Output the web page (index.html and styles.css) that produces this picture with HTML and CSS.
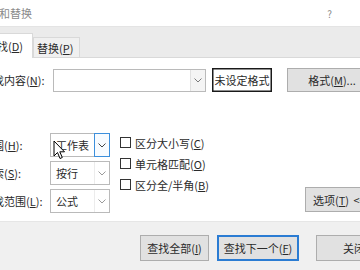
FILE: index.html
```html
<!DOCTYPE html>
<html lang="zh-CN">
<head>
<meta charset="utf-8">
<link rel="stylesheet" href="styles.css">
</head>
<body>
<div class="dialog">
  <div class="titlebar">
    <span class="title">查找和替换</span>
    <span class="help">?</span>
  </div>
  <div class="tabstrip">
    <div class="tab active">查找(<u>D</u>)</div>
    <div class="tab">替换(<u>P</u>)</div>
  </div>
  <div class="pane">
    <div class="find-row">
      <span class="lbl lbl-find">查找内容(<u>N</u>):</span>
      <div class="combo combo-find">
        <span class="val"></span>
        <span class="arrow"><svg width="8" height="5" viewBox="0 0 8 5"><path d="M0.5 0.5 L4 4 L7.5 0.5" fill="none" stroke="#7a7a7a" stroke-width="1"/></svg></span>
      </div>
      <div class="btn btn-outline">未设定格式</div>
      <div class="btn btn-format">格式(<u>M</u>)...</div>
    </div>
    <div class="options">
      <div class="selects">
        <div class="srow">
          <span class="lbl lbl-sel">范围(<u>H</u>):</span>
          <div class="combo combo-sel hot">
            <span class="val">工作表</span>
            <span class="arrow"><svg width="8" height="5" viewBox="0 0 8 5"><path d="M0.5 0.5 L4 4 L7.5 0.5" fill="none" stroke="#444" stroke-width="1"/></svg></span>
          </div>
        </div>
        <div class="srow">
          <span class="lbl lbl-sel">搜索(<u>S</u>):</span>
          <div class="combo combo-sel">
            <span class="val">按行</span>
            <span class="arrow"><svg width="8" height="5" viewBox="0 0 8 5"><path d="M0.5 0.5 L4 4 L7.5 0.5" fill="none" stroke="#9a9a9a" stroke-width="1"/></svg></span>
          </div>
        </div>
        <div class="srow">
          <span class="lbl lbl-sel">查找范围(<u>L</u>):</span>
          <div class="combo combo-sel">
            <span class="val">公式</span>
            <span class="arrow"><svg width="8" height="5" viewBox="0 0 8 5"><path d="M0.5 0.5 L4 4 L7.5 0.5" fill="none" stroke="#9a9a9a" stroke-width="1"/></svg></span>
          </div>
        </div>
      </div>
      <div class="checks">
        <div class="chk"><span class="box"></span><span>区分大小写(<u>C</u>)</span></div>
        <div class="chk"><span class="box"></span><span>单元格匹配(<u>O</u>)</span></div>
        <div class="chk"><span class="box"></span><span>区分全/半角(<u>B</u>)</span></div>
      </div>
      <div class="btn btn-options">选项(<u>T</u>) &lt;&lt;</div>
    </div>
  </div>
  <div class="footer">
    <div class="btn btn-all">查找全部(<u>I</u>)</div>
    <div class="btn btn-next">查找下一个(<u>F</u>)</div>
    <div class="btn btn-close">关闭</div>
  </div>
</div>
<svg class="cursor" width="13" height="20" viewBox="0 0 13 20">
  <path d="M1 1 L1 16 L4.5 12.5 L7 18.5 L9.3 17.5 L6.8 11.8 L11.5 11.8 Z" fill="#fff" stroke="#000" stroke-width="1" stroke-linejoin="miter"/>
</svg>
</body>
</html>
```

FILE: styles.css
```css
html, body {
  margin: 0;
  padding: 0;
}
body {
  width: 360px;
  height: 270px;
  overflow: hidden;
  background: #f0f0f0;
  font-family: "Noto Sans CJK SC", "Noto Sans", sans-serif;
  font-size: 11px;
  color: #2a2a2a;
  position: relative;
}
u {
  text-decoration: underline;
  text-underline-offset: 1px;
}
.dialog {
  width: 440px;
  margin-left: -30px;
  display: flex;
  flex-direction: column;
}
.titlebar {
  height: 26px;
  background: #fff;
  display: flex;
  align-items: center;
  padding-left: 7px;
}
.title {
  color: #8a8a8a;
  font-size: 11px;
  line-height: 14px;
}
.help {
  margin-left: auto;
  margin-right: 78px;
  color: #8a8a8a;
  font-size: 10px;
}
.tabstrip {
  height: 32px;
  box-sizing: border-box;
  background: #ebebeb;
  border-top: 1px solid #e4e4e4;
  border-bottom: 1px solid #d9d9d9;
  display: flex;
  align-items: flex-end;
  padding-left: 7px;
}
.tab {
  height: 20px;
  box-sizing: border-box;
  background: #f0f0f0;
  border: 1px solid #d9d9d9;
  border-bottom: none;
  padding: 0 6px 0 3px;
  display: flex;
  align-items: center;
  font-size: 11px;
}
.tab.active {
  height: 25px;
  background: #fff;
  border-left: none;
  border-right: 1px solid #d9d9d9;
  padding: 0 9px 0 9px;
  margin-bottom: -1px;
}
.pane {
  background: #fff;
  height: 164px;
  box-sizing: border-box;
  padding: 10px 0 0 12px;
  border-bottom: 1px solid #e6e6e6;
}
.find-row {
  display: flex;
  align-items: center;
  height: 24px;
}
.lbl {
  white-space: nowrap;
  flex: none;
}
.lbl-find {
  width: 71px;
}
.lbl-sel {
  width: 68px;
}
.combo {
  box-sizing: border-box;
  border: 1px solid #bababa;
  background: #fff;
  display: flex;
  align-items: stretch;
  flex: none;
}
.combo .val {
  flex: 1;
  display: flex;
  align-items: center;
  padding-left: 5px;
  font-size: 11px;
}
.combo .arrow {
  width: 15px;
  display: flex;
  align-items: center;
  justify-content: center;
  box-sizing: border-box;
}
.combo-find {
  width: 153px;
  height: 23px;
}
.combo-find .arrow {
  background: #f4f4f4;
  border-left: 1px solid #e0e0e0;
}
.combo-sel {
  width: 60px;
  height: 24px;
}
.combo-sel .arrow {
  border-left: 1px solid #ececec;
}
.combo-sel.hot .arrow {
  border: 1px solid #3c8fdc;
  margin: -1px -1px -1px 0;
  width: 16px;
  background: #f7fbff;
}
.btn {
  box-sizing: border-box;
  background: #e1e1e1;
  border: 1px solid #adadad;
  display: flex;
  align-items: center;
  justify-content: center;
  white-space: nowrap;
  flex: none;
  font-size: 11px;
}
.btn-outline {
  margin-left: 6px;
  width: 60px;
  height: 24px;
  background: #fff;
  border: 1px solid #1a1a1a;
  box-shadow: inset 0 0 0 0.5px #1a1a1a;
}
.btn-format {
  margin-left: 15px;
  width: 90px;
  height: 24px;
}
.options {
  display: flex;
  align-items: flex-start;
  margin-top: 40px;
}
.selects {
  display: flex;
  flex-direction: column;
  gap: 4px;
  padding-top: 1px;
  width: 138px;
  flex: none;
}
.srow {
  display: flex;
  align-items: center;
}
.checks {
  display: flex;
  flex-direction: column;
  width: 185px;
  flex: none;
}
.chk {
  height: 21px;
  display: flex;
  align-items: center;
}
.chk .box {
  width: 11px;
  height: 11px;
  box-sizing: border-box;
  border: 1px solid #333;
  background: #fff;
  margin-right: 4px;
  flex: none;
}
.btn-options {
  margin-top: 55px;
  width: 72px;
  height: 25px;
  justify-content: flex-start;
  padding-left: 7px;
  word-spacing: 2px;
}
.footer {
  height: 48px;
  display: flex;
  align-items: flex-start;
  padding: 13px 0 0 170px;
  gap: 8px;
}
.footer .btn {
  height: 26px;
}
.btn-all {
  width: 69px;
}
.btn-next {
  width: 82px;
  border: 2px solid #2b7cd3;
}
.btn-close {
  width: 76px;
  margin-left: 9px;
}
.cursor {
  position: absolute;
  left: 53px;
  top: 140px;
}
```
